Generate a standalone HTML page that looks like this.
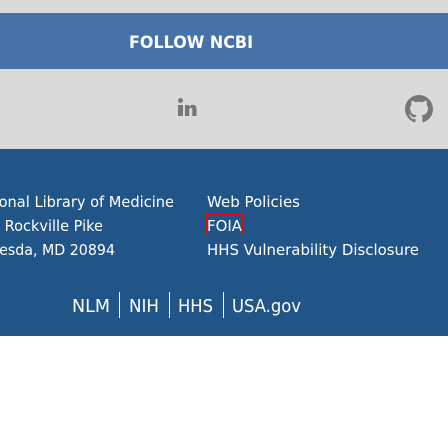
<!DOCTYPE html>
<html style="margin:0;padding:0;width:448px;height:448px;overflow:hidden"><head><style>
html,body{margin:0;padding:0;width:448px;height:448px;overflow:hidden;background:#fff}
svg{display:block}
text{font-family:"DejaVu Sans","Liberation Sans",sans-serif;fill:#fff}
</style></head><body>
<svg width="448" height="448" viewBox="0 0 448 448">
<rect x="0" y="0" width="448" height="13" fill="#dadada"/>
<rect x="0" y="13" width="448" height="56" fill="#4672a8"/>
<text x="129" y="48" font-size="17" font-weight="bold" textLength="124" lengthAdjust="spacingAndGlyphs">FOLLOW NCBI</text>
<rect x="0" y="69" width="448" height="80" fill="#dadada"/>
<circle cx="180.5" cy="100.5" r="2.5" fill="#777"/>
<rect x="178" y="105" width="5" height="11" fill="#777"/>
<path d="M185 116V105h4v2c1-1.5 2.5-2.3 4-2.3 2.5 0 3.5 1.6 3.5 4.3V116h-4.2v-6.5c0-1.2-.5-1.8-1.4-1.8-1 0-1.7.7-1.7 2V116z" fill="#777"/>
<g transform="translate(405,95) scale(1.75)"><path fill="#777" d="M8 0C3.58 0 0 3.58 0 8c0 3.54 2.29 6.53 5.47 7.59.4.07.55-.17.55-.38 0-.19-.01-.82-.01-1.49-2.01.37-2.53-.49-2.69-.94-.09-.23-.48-.94-.82-1.13-.28-.15-.68-.52-.01-.53.63-.01 1.08.58 1.23.82.72 1.21 1.87.87 2.33.66.07-.52.28-.87.51-1.07-1.78-.2-3.64-.89-3.64-3.95 0-.87.31-1.59.82-2.150-.08-.2-.36-1.02.08-2.12 0 0 .67-.21 2.2.82.64-.18 1.32-.27 2-.27.68 0 1.36.09 2 .27 1.53-1.04 2.2-.82 2.2-.82.44 1.1.16 1.92.08 2.12.51.56.82 1.27.82 2.15 0 3.07-1.87 3.75-3.65 3.95.29.25.54.73.54 1.48 0 1.07-.01 1.93-.01 2.2 0 .21.15.46.55.38A8.013 8.013 0 0016 8c0-4.42-3.58-8-8-8z"/></g>
<rect x="0" y="149" width="448" height="187" fill="#215487"/>
<text x="-31" y="207" font-size="15.5" textLength="205" lengthAdjust="spacingAndGlyphs">National Library of Medicine</text>
<text x="-37" y="231" font-size="15.5" textLength="140" lengthAdjust="spacingAndGlyphs">8600 Rockville Pike</text>
<text x="-34" y="255" font-size="15.5" textLength="149" lengthAdjust="spacingAndGlyphs">Bethesda, MD 20894</text>
<text x="207" y="207" font-size="15.5" textLength="93" lengthAdjust="spacingAndGlyphs">Web Policies</text>
<text x="207" y="231" font-size="15.5" textLength="35" lengthAdjust="spacingAndGlyphs">FOIA</text>
<rect x="206.5" y="214.5" width="36" height="19" fill="none" stroke="#e00" stroke-width="1"/>
<text x="207" y="255" font-size="15.5" textLength="212" lengthAdjust="spacingAndGlyphs">HHS Vulnerability Disclosure</text>
<text x="72" y="312" font-size="18" textLength="38" lengthAdjust="spacingAndGlyphs">NLM</text>
<rect x="119" y="292" width="1" height="26" fill="#fff"/>
<text x="129" y="312" font-size="18" textLength="30" lengthAdjust="spacingAndGlyphs">NIH</text>
<rect x="169" y="292" width="1" height="26" fill="#fff"/>
<text x="178" y="312" font-size="18" textLength="35" lengthAdjust="spacingAndGlyphs">HHS</text>
<rect x="223" y="292" width="1" height="26" fill="#fff"/>
<text x="232" y="312" font-size="18" textLength="69" lengthAdjust="spacingAndGlyphs">USA.gov</text>
</svg>
</body></html>
